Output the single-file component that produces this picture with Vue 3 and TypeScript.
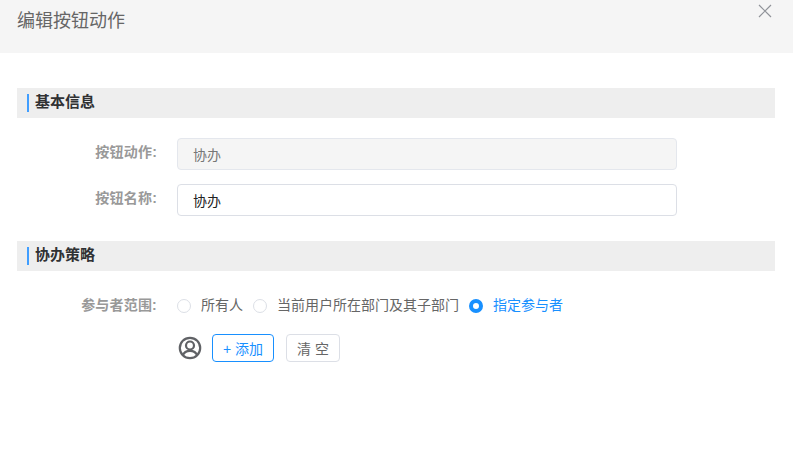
<script setup lang="ts">
const options: { label: string; checked: boolean }[] = [
  { label: '所有人', checked: false },
  { label: '当前用户所在部门及其子部门', checked: false },
  { label: '指定参与者', checked: true },
]
</script>

<template>
  <div class="dialog">
    <header class="head">
      <h1 class="title">编辑按钮动作</h1>
      <svg class="close" width="14" height="14" viewBox="0 0 14 14">
        <path d="M1 1L13 13M13 1L1 13" stroke="#909399" stroke-width="1.2" fill="none" />
      </svg>
    </header>
    <main class="body">
      <section class="section first">
        <div class="bar"><span class="mark"></span><span class="bar-text">基本信息</span></div>
        <div class="row r1">
          <label class="label">按钮动作:</label>
          <div class="input disabled">协办</div>
        </div>
        <div class="row r2">
          <label class="label">按钮名称:</label>
          <div class="input">协办</div>
        </div>
      </section>
      <section class="section second">
        <div class="bar"><span class="mark"></span><span class="bar-text">协办策略</span></div>
        <div class="row r3">
          <label class="label">参与者范围:</label>
          <div class="radios">
            <span v-for="o in options" :key="o.label" class="radio" :class="{ on: o.checked }">
              <span class="dot"></span><span class="radio-text">{{ o.label }}</span>
            </span>
          </div>
        </div>
        <div class="actions">
          <svg class="user" width="24" height="24" viewBox="0 0 24 24" fill="none" stroke="#606266" stroke-width="2.2">
            <circle cx="12" cy="12" r="10.2" />
            <circle cx="12" cy="9.5" r="4" />
            <path d="M4.800 19.500c1.200-3.400 3.900-4.700 7.200-4.700s6 1.300 7.200 4.700" />
          </svg>
          <button class="btn add">+ 添加</button>
          <button class="btn clear">清 空</button>
        </div>
      </section>
    </main>
  </div>
</template>

<style>
html, body { margin: 0; background: #fff; }
</style>

<style scoped>
.dialog {
  width: 793px;
  height: 467px;
  overflow: hidden;
  background: #fff;
  font-family: "Liberation Sans", "Noto Sans CJK SC", sans-serif;
  color: #606266;
}
.head {
  height: 53px;
  background: #f5f5f5;
  display: flex;
  justify-content: space-between;
  align-items: flex-start;
  padding: 0 21px 0 17px;
  box-sizing: border-box;
}
.title {
  margin: 11px 0 0;
  font-size: 18px;
  line-height: 21px;
  font-weight: 400;
  color: #666;
}
.close { margin-top: 4px; }
.body { padding: 35px 18px 0 17px; }
.bar {
  height: 30px;
  background: #eee;
  display: flex;
  align-items: center;
  padding-left: 10px;
  font-size: 15px;
  font-weight: 700;
  color: #303133;
}
.bar-text { line-height: 26px; height: 28px; }
.mark {
  width: 2px;
  height: 18px;
  background: #409eff;
  margin-right: 6px;
}
.section.second { margin-top: 25px; }
.row { display: flex; align-items: center; }
.r1 { margin-top: 20px; }
.r2 { margin-top: 14px; }
.r3 { margin-top: 20px; height: 30px; }
.label {
  width: 140px;
  text-align: right;
  font-size: 14px;
  letter-spacing: 0.2px;
  line-height: 26px;
  height: 28px;
  font-weight: 700;
  color: #999;
  flex: none;
}
.r1 .label, .r2 .label { line-height: 24px; }
.input {
  margin-left: 20px;
  width: 500px;
  height: 32px;
  box-sizing: border-box;
  border: 1px solid #dcdfe6;
  border-radius: 4px;
  padding-left: 15px;
  line-height: 32px;
  font-size: 14px;
  color: #222;
  background: #fff;
}
.input.disabled {
  background: #f5f5f5;
  border-color: #e4e7ed;
  color: #777;
}
.radios { display: flex; margin-left: 20px; }
.radio {
  display: flex;
  align-items: center;
  font-size: 14px;
  color: #666;
  margin-right: 10px;
}
.radio-text { line-height: 26px; height: 28px; }
.dot {
  width: 14px;
  height: 14px;
  box-sizing: border-box;
  border: 1px solid #dcdfe6;
  border-radius: 50%;
  margin-right: 10px;
  background: #fff;
  flex: none;
}
.radio.on { color: #1890ff; }
.radio.on .dot { border: 4.5px solid #1890ff; }
.actions {
  display: flex;
  align-items: center;
  margin: 13px 0 0 160px;
  height: 28px;
}
.user { margin-left: 1px; flex: none; }
.btn {
  height: 28px;
  box-sizing: border-box;
  border-radius: 4px;
  font-family: inherit;
  font-size: 14px;
  background: #fff;
  padding: 0;
}
.add {
  width: 62px;
  margin-left: 10px;
  border: 1px solid #1890ff;
  color: #1890ff;
}
.clear {
  width: 54px;
  margin-left: 12px;
  border: 1px solid #dcdfe6;
  color: #666;
}
</style>
